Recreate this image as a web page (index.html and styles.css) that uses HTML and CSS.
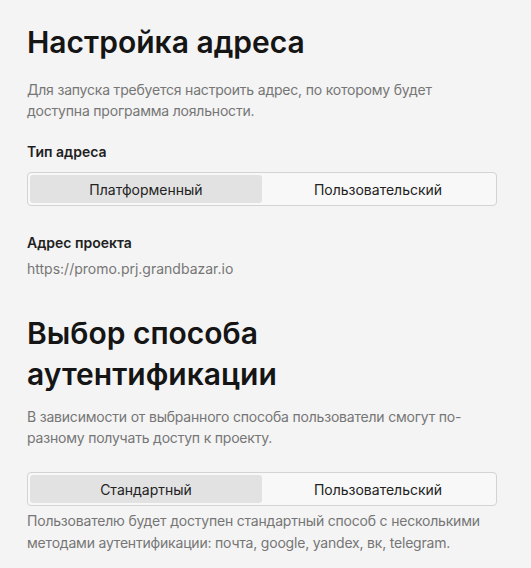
FILE: index.html
```html
<!DOCTYPE html>
<html lang="ru">
<head>
<meta charset="utf-8">
<link rel="stylesheet" href="styles.css">
</head>
<body>
<main class="page">
  <section class="section">
    <h1 class="title">Настройка адреса</h1>
    <p class="desc">Для запуска требуется настроить адрес, по которому будет доступна программа лояльности.</p>
    <div class="field">
      <div class="label">Тип адреса</div>
      <div class="segmented">
        <div class="seg seg-active">Платформенный</div>
        <div class="seg">Пользовательский</div>
      </div>
    </div>
    <div class="field field-addr">
      <div class="label">Адрес проекта</div>
      <div class="value">https://promo.prj.grandbazar.io</div>
    </div>
  </section>
  <section class="section section-auth">
    <h1 class="title">Выбор способа аутентификации</h1>
    <p class="desc desc-auth">В зависимости от выбранного способа пользователи смогут по-разному получать доступ к проекту.</p>
    <div class="segmented segmented-auth">
      <div class="seg seg-active">Стандартный</div>
      <div class="seg">Пользовательский</div>
    </div>
    <p class="desc hint">Пользователю будет доступен стандартный способ с несколькими методами аутентификации: почта, google, yandex, вк, telegram.</p>
  </section>
</main>
</body>
</html>
```

FILE: styles.css
```css
html, body {
  margin: 0;
  padding: 0;
  background: #f4f4f4;
}
body {
  font-family: Inter, "Noto Sans", "Liberation Sans", sans-serif;
  color: #1a1a1a;
}
.page {
  padding: 22px 34px 0 27px;
  width: 470px;
}
.title {
  margin: 0;
  font-size: 30px;
  line-height: 41px;
  font-weight: 600;
  color: #151515;
}
.desc {
  margin: 16px 0 0;
  font-size: 14px;
  line-height: 21px;
  letter-spacing: -0.2px;
  color: #767676;
}
.field {
  margin-top: 21px;
}
.label {
  font-size: 14px;
  line-height: 20px;
  font-weight: 600;
  color: #1f1f1f;
}
.segmented {
  margin-top: 10px;
  display: grid;
  grid-template-columns: 1fr 1fr;
  padding: 2px;
  border: 1px solid #d3d3d3;
  border-radius: 4px;
  background: #f8f8f8;
}
.seg {
  height: 28px;
  display: flex;
  align-items: center;
  justify-content: center;
  font-size: 14px;
  color: #222;
  border-radius: 3px;
}
.seg-active {
  background: #e2e2e2;
}
.field-addr {
  margin-top: 27px;
}
.value {
  margin-top: 6px;
  font-size: 14px;
  line-height: 20px;
  color: #767676;
}
.section-auth {
  margin-top: 34px;
}
.desc-auth {
  margin-top: 11px;
}
.segmented-auth {
  margin-top: 24px;
}
.hint {
  margin-top: 4px;
  line-height: 22px;
}
```
